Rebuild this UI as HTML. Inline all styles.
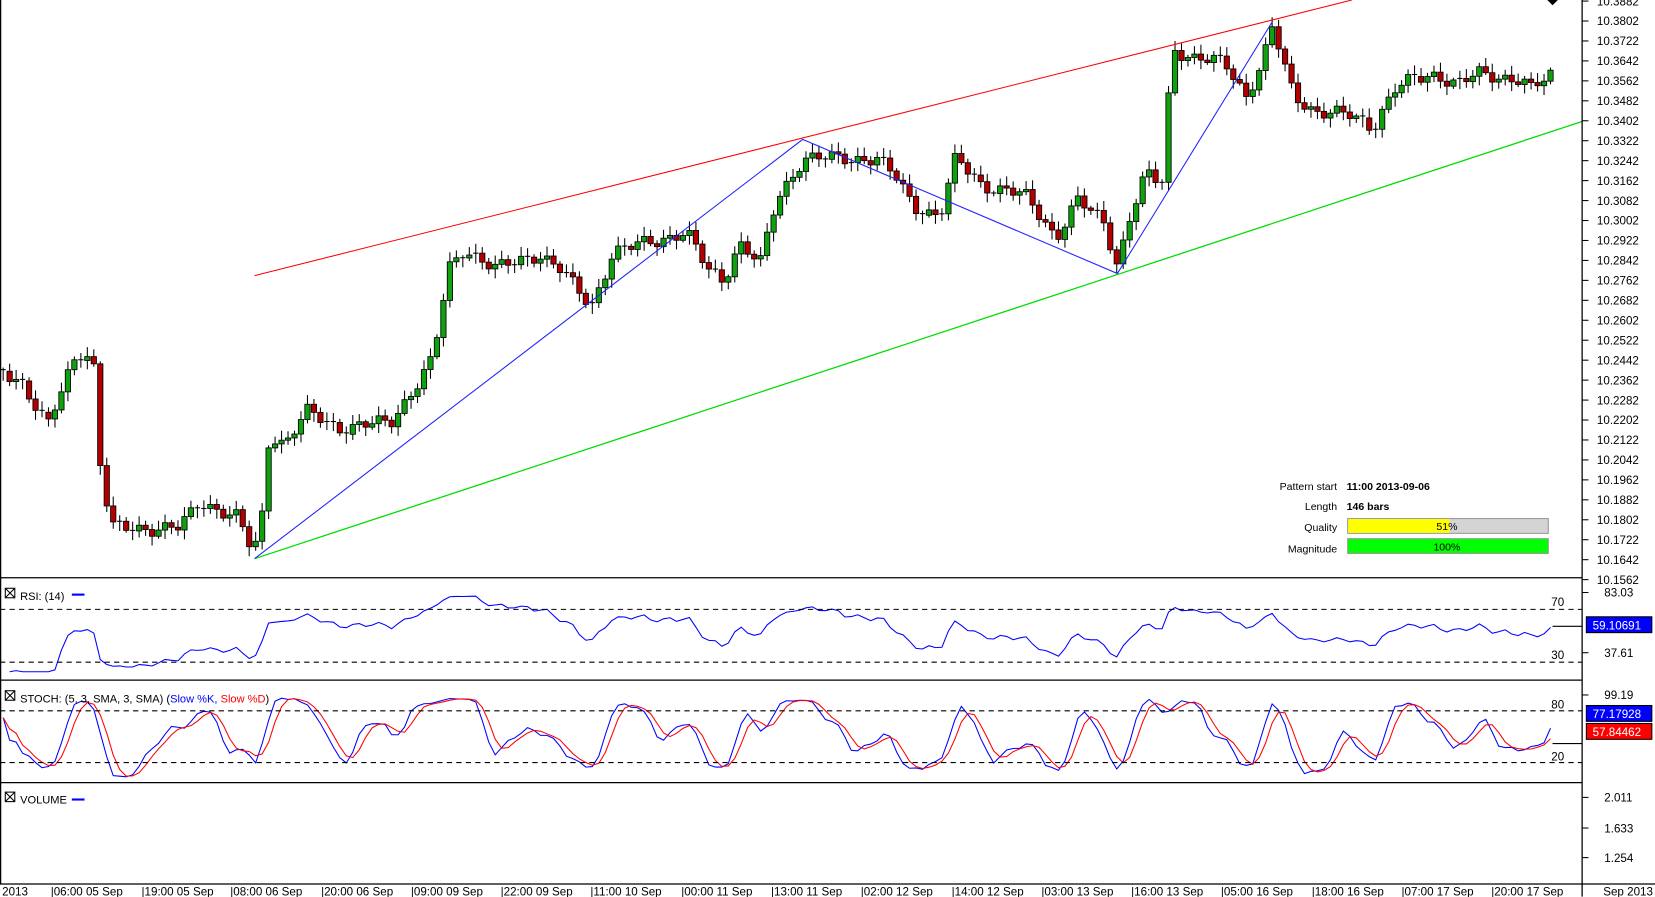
<!DOCTYPE html>
<html><head><meta charset="utf-8"><style>
html,body{margin:0;padding:0;background:#fff;overflow:hidden}
svg{display:block;font-family:"Liberation Sans",sans-serif}
</style></head><body>
<svg id="s" width="1655" height="897" viewBox="0 0 1567 849.3" xmlns="http://www.w3.org/2000/svg">
<rect width="1567" height="850" fill="#fff"/>
<g id="cand"></g>
<line x1="241" y1="261" x2="1280" y2="0" stroke="#f00" stroke-width="1"/>
<line x1="241" y1="529" x2="1498" y2="115" stroke="#0d0" stroke-width="1.2"/>
<polyline points="241,529 760,132 1058,259 1205,20" fill="none" stroke="#22f" stroke-width="1"/>
<path d="M1465,0 L1475,0 L1470,5 Z" fill="#000"/>
<g id="ind"></g>
<g stroke="#000" stroke-width="1.2" fill="none">
<line x1="1498" y1="0" x2="1498" y2="849"/>
<line x1="0" y1="547" x2="1498" y2="547"/>
<line x1="0" y1="644" x2="1498" y2="644"/>
<line x1="0" y1="741" x2="1498" y2="741"/>
<line x1="0" y1="837" x2="1567" y2="837"/>
<line x1="0.6" y1="0" x2="0.6" y2="837"/>
</g>
<g stroke="#000" stroke-dasharray="5,4" stroke-width="1">
<line x1="0" y1="577" x2="1498" y2="577"/><line x1="0" y1="627" x2="1498" y2="627"/>
<line x1="0" y1="673" x2="1498" y2="673"/><line x1="0" y1="722" x2="1498" y2="722"/>
</g>
<g font-size="11" fill="#000">
<text x="1481" y="574" text-anchor="end">70</text><text x="1481" y="624" text-anchor="end">30</text>
<text x="1481" y="671" text-anchor="end">80</text><text x="1481" y="720" text-anchor="end">20</text>
<text x="1519" y="565">83.03</text><text x="1519" y="622">37.61</text>
<text x="1519" y="662">99.19</text>
<text x="1519" y="759">2.011</text><text x="1519" y="788">1.633</text><text x="1519" y="816">1.254</text>
</g>
<g stroke="#000"><line x1="1498" y1="561" x2="1504" y2="561"/><line x1="1498" y1="618" x2="1504" y2="618"/><line x1="1498" y1="658" x2="1504" y2="658"/><line x1="1498" y1="755" x2="1504" y2="755"/><line x1="1498" y1="784" x2="1504" y2="784"/><line x1="1498" y1="812" x2="1504" y2="812"/></g>
<rect x="1502" y="584" width="62" height="15" fill="#00f" stroke="#000"/><text x="1508" y="596" font-size="11" fill="#fff">59.10691</text>
<rect x="1502" y="668" width="62" height="15" fill="#00f" stroke="#000"/><text x="1508" y="680" font-size="11" fill="#fff">77.17928</text>
<rect x="1502" y="685" width="62" height="15" fill="#f00" stroke="#000"/><text x="1508" y="697" font-size="11" fill="#fff">57.84462</text>
<g font-size="10.5">
<rect x="5" y="557" width="9" height="9" fill="none" stroke="#000"/><path d="M5,557 L14,566 M14,557 L5,566" stroke="#000"/>
<text x="19" y="568">RSI: (14)</text><line x1="68" y1="563" x2="80" y2="563" stroke="#00f" stroke-width="2"/>
<rect x="5" y="654" width="9" height="9" fill="none" stroke="#000"/><path d="M5,654 L14,663 M14,654 L5,663" stroke="#000"/>
<text x="19" y="665">STOCH: (5, 3, SMA, 3, SMA) (<tspan fill="#00f">Slow %K, </tspan><tspan fill="#f00">Slow %D</tspan>)</text>
<rect x="5" y="750" width="9" height="9" fill="none" stroke="#000"/><path d="M5,750 L14,759 M14,750 L5,759" stroke="#000"/>
<text x="19" y="761">VOLUME</text><line x1="68" y1="757" x2="80" y2="757" stroke="#00f" stroke-width="2"/>
</g>
<g font-size="10" fill="#000">
<text x="1266" y="464" text-anchor="end">Pattern start</text><text x="1275" y="464" font-weight="bold">11:00 2013-09-06</text>
<text x="1266" y="483" text-anchor="end">Length</text><text x="1275" y="483" font-weight="bold">146 bars</text>
<text x="1266" y="503" text-anchor="end">Quality</text>
<text x="1266" y="523" text-anchor="end">Magnitude</text>
</g>
<rect x="1276" y="491" width="190" height="14" fill="#d4d4d4" stroke="#999"/>
<rect x="1276.5" y="491.5" width="96" height="13" fill="#ff0"/>
<text x="1370" y="502" font-size="10" text-anchor="middle">51%</text>
<rect x="1276" y="510" width="190" height="14" fill="#0f0" stroke="#999"/>
<text x="1370" y="521" font-size="10" text-anchor="middle">100%</text>
<g id="ax" font-size="11"></g>
</svg>
<script>
var NS="http://www.w3.org/2000/svg";
function el(p,t,a,txt){var e=document.createElementNS(NS,t);for(var k in a)e.setAttribute(k,a[k]);if(txt!=null)e.textContent=txt;p.appendChild(e);return e;}
var ax=document.getElementById('ax');
for(var i=0;i<30;i++){var p=10.3882-i*0.008;var y=1+i*18.89;if(y>550)break;
 el(ax,'line',{x1:1498,y1:y,x2:1504,y2:y,stroke:'#000'});
 el(ax,'text',{x:1512,y:y+4},p.toFixed(4));}
var bl=[[2,"2013"],[48,"|06:00 05 Sep"],[134,"|19:00 05 Sep"],[218,"|08:00 06 Sep"],[304,"|20:00 06 Sep"],[389,"|09:00 09 Sep"],[474,"|22:00 09 Sep"],[559,"|11:00 10 Sep"],[645,"|00:00 11 Sep"],[730,"|13:00 11 Sep"],[815,"|02:00 12 Sep"],[901,"|14:00 12 Sep"],[986,"|03:00 13 Sep"],[1071,"|16:00 13 Sep"],[1156,"|05:00 16 Sep"],[1242,"|18:00 16 Sep"],[1327,"|07:00 17 Sep"],[1412,"|20:00 17 Sep"],[1518,"Sep 2013"]];
bl.forEach(function(b){el(ax,'text',{x:b[0],y:848},b[1]);});
var kp=[[0,350],[20,360],[45,405],[70,340],[80,330],[90,350],[95,440],[105,500],[120,500],[170,500],[190,475],[225,490],[240,525],[250,480],[255,410],[270,420],[290,390],[320,405],[370,400],[390,370],[410,340],[425,255],[440,235],[470,255],[510,240],[530,255],[560,290],[580,240],[610,230],[650,220],[670,255],[685,265],[700,230],[720,250],[735,190],[760,150],[800,150],[830,150],[850,170],[865,195],[890,205],[905,150],[930,175],[970,185],[990,210],[1000,225],[1020,190],[1045,210],[1058,250],[1070,205],[1085,165],[1100,175],[1110,45],[1130,55],[1160,60],[1180,90],[1195,60],[1205,25],[1215,60],[1225,90],[1245,105],[1280,110],[1300,120],[1320,85],[1340,75],[1360,70],[1380,80],[1400,70],[1440,75],[1450,85],[1470,70]];
function interp(x){for(var i=1;i<kp.length;i++){if(x<=kp[i][0]){var a=kp[i-1],b=kp[i];return a[1]+(b[1]-a[1])*(x-a[0])/(b[0]-a[0]);}}return kp[kp.length-1][1];}
var cg=document.getElementById('cand');var closes=[];var prev=interp(0);
var st=6.13;
for(var i=0;i*st+3<=1472;i++){var x=3+i*st;var c=interp(x)+Math.sin(i*1.7)*5+Math.sin(i*0.63)*3;
 var o=prev;var hi=Math.min(o,c)-2-Math.abs(Math.sin(i*2.3))*7;var lo=Math.max(o,c)+2+Math.abs(Math.cos(i*1.9))*7;
 el(cg,'line',{x1:x,y1:hi,x2:x,y2:lo,stroke:'#000'});
 var t=Math.min(o,c),h=Math.max(1,Math.abs(o-c));
 if(h<2){el(cg,'line',{x1:x-2.5,y1:t,x2:x+2.5,y2:t,stroke:'#000'});}
 else el(cg,'rect',{x:x-2.5,y:t,width:5,height:h,fill:c<o?'#10a010':'#b00000',stroke:'#000','stroke-width':0.8});
 closes.push({x:x,c:c,h:hi,l:lo});prev=c;}
var ind=document.getElementById('ind');
// RSI
var pts=[],ag=0,al=0,n=14;
for(var i=1;i<closes.length;i++){var d=closes[i-1].c-closes[i].c;var g=d>0?d:0,l=d<0?-d:0;
 if(i<=n){ag+=g/n;al+=l/n;}else{ag=(ag*(n-1)+g)/n;al=(al*(n-1)+l)/n;}
 var r=al==0?100:100-100/(1+ag/al);r=50+(r-50)*0.8;
 var y=561+(83.03-r)*1.255;y=Math.max(560,Math.min(636,y));pts.push(closes[i].x+','+y.toFixed(1));}
el(ind,'polyline',{points:pts.join(' '),fill:'none',stroke:'#00f'});
el(ind,'line',{x1:1470,y1:593,x2:1498,y2:593,stroke:'#000'});
// Stoch
var fk=[],K=[],D=[];
for(var i=0;i<closes.length;i++){var hh=1e9,ll=-1e9;for(var j=Math.max(0,i-4);j<=i;j++){hh=Math.min(hh,closes[j].h);ll=Math.max(ll,closes[j].l);}
 fk.push(ll==hh?50:100*(ll-closes[i].c)/(ll-hh));}
function sma(a,i,m){var s=0,c=0;for(var j=Math.max(0,i-m+1);j<=i;j++){s+=a[j];c++;}return s/c;}
for(var i=0;i<fk.length;i++)K.push(sma(fk,i,3));
for(var i=0;i<K.length;i++)D.push(sma(K,i,3));
function sy(v){return (673+(80-v)*0.817).toFixed(1);}
el(ind,'polyline',{points:closes.map(function(c,i){return c.x+','+sy(K[i]);}).join(' '),fill:'none',stroke:'#00f'});
el(ind,'polyline',{points:closes.map(function(c,i){return c.x+','+sy(D[i]);}).join(' '),fill:'none',stroke:'#f00'});
el(ind,'line',{x1:1470,y1:704,x2:1498,y2:704,stroke:'#000'});
</script>
</body></html>
